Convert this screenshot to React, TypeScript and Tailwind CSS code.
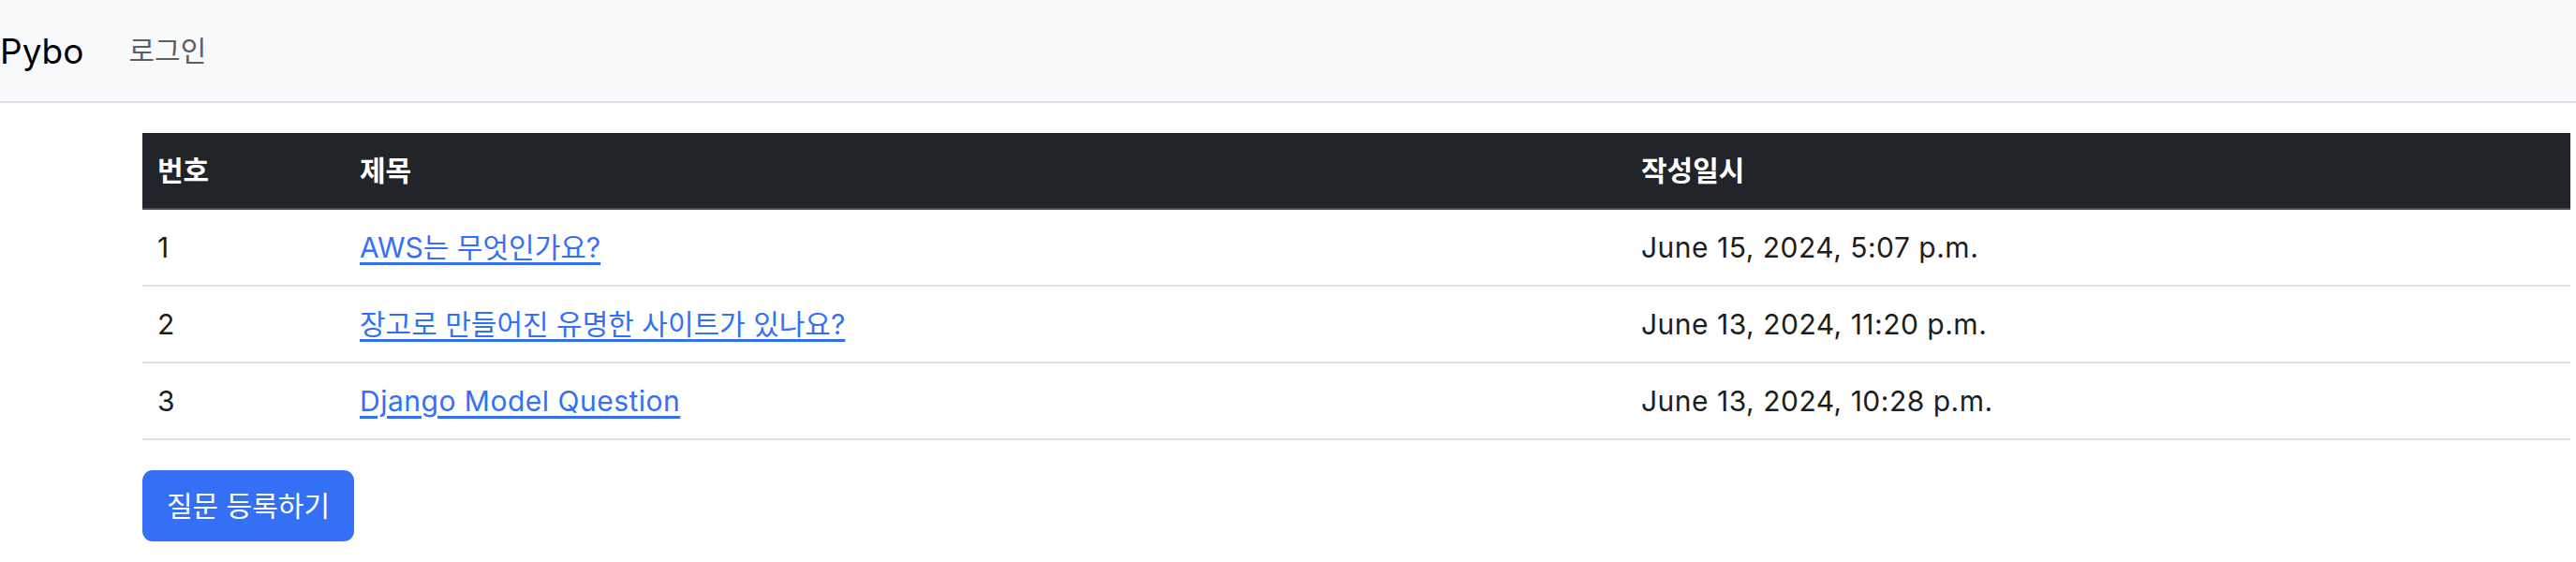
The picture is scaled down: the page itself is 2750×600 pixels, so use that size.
const QUESTIONS = [
  { id: 1, subject: "AWS는 무엇인가요?", created: "June 15, 2024, 5:07 p.m.", latin: false },
  { id: 2, subject: "장고로 만들어진 유명한 사이트가 있나요?", created: "June 13, 2024, 11:20 p.m.", latin: false },
  { id: 3, subject: "Django Model Question", created: "June 13, 2024, 10:28 p.m.", latin: true },
];

export default function App() {
  return (
    <div className="min-h-screen bg-white font-['Inter','Noto_Sans_CJK_KR',sans-serif] text-[30px] text-[#1b1e21]">
      {/* navbar */}
      <nav className="flex h-[110px] items-center border-b-2 border-[#dee2e6] bg-[#f8f9fa]">
        <a className="text-[37px] leading-none text-black">Pybo</a>
        <a className="ml-[48px] leading-none text-[#5c5e60]">로그인</a>
      </nav>

      <div className="pl-[152px] pr-[6px] pt-[32px]">
        {/* question list */}
        <div>
          <div className="grid h-[82px] grid-cols-[216px_1368px_1fr] items-center border-b-2 border-[#4b4f53] bg-[#212529] font-bold text-white">
            <div className="px-[16px]">번호</div>
            <div className="px-[16px]">제목</div>
            <div className="px-[16px]">작성일시</div>
          </div>
          {QUESTIONS.map((q) => (
            <div
              key={q.id}
              className="grid h-[82px] grid-cols-[216px_1368px_1fr] items-center border-b-2 border-[#dee2e6]"
            >
              <div className="px-[16px]">{q.id}</div>
              <div className="px-[16px]">
                <a
                  className={
                    q.latin
                      ? "text-[#3470f6] tracking-[0.5px] underline underline-offset-[5px]"
                      : "text-[#3470f6] underline underline-offset-[5px]"
                  }
                >
                  {q.subject}
                </a>
              </div>
              <div className="px-[16px] tracking-[0.5px]">{q.created}</div>
            </div>
          ))}
        </div>

        <button className="mt-[32px] h-[76px] w-[226px] rounded-[11px] bg-[#3470f6] text-white">
          질문 등록하기
        </button>
      </div>
    </div>
  );
}
